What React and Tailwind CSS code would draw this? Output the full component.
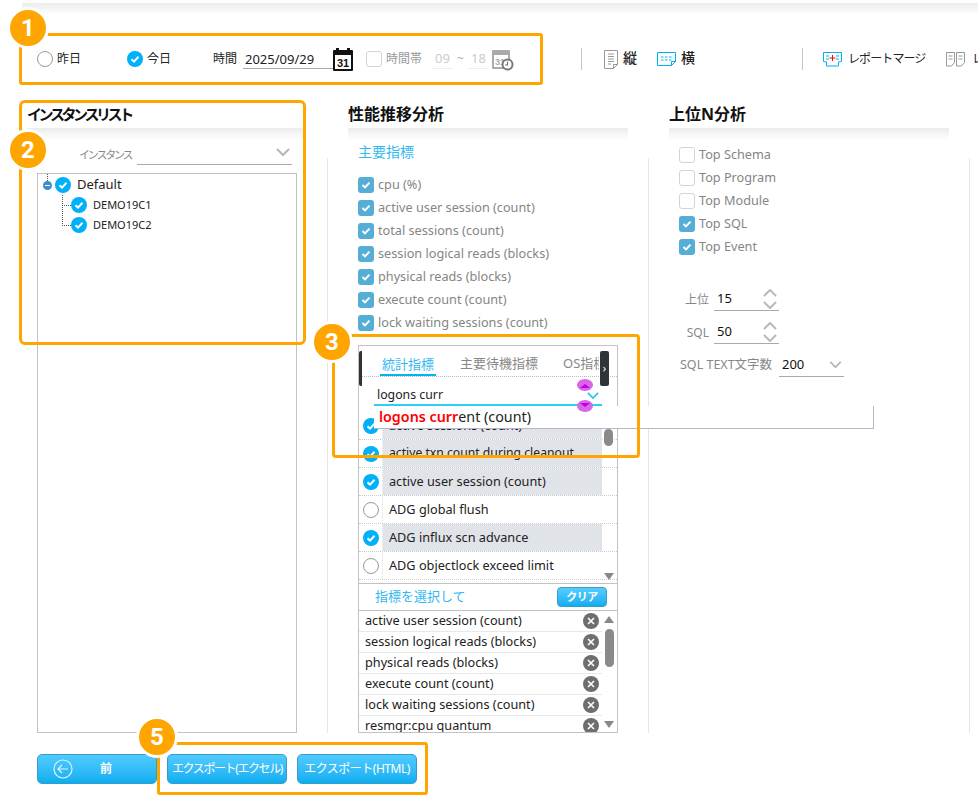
import React from "react";

const font = "font-['Noto_Sans','Noto_Sans_CJK_JP',sans-serif]";

const Tick = ({ size = 16, color = "#00b0f8" }) => (
  <svg width={size} height={size} viewBox="0 0 16 16" className="shrink-0">
    <circle cx="8" cy="8" r="8" fill={color} />
    <path d="M4.5 8.2 7 10.6 11.5 5.8" fill="none" stroke="#fff" strokeWidth="2" />
  </svg>
);

const Radio = () => (
  <span className="w-4 h-4 rounded-full border border-[#999] bg-white shrink-0"></span>
);

const Box = ({ on }) =>
  on ? (
    <span className="w-4 h-4 rounded-[3px] bg-[#55aed6] flex items-center justify-center shrink-0">
      <svg width="12" height="12" viewBox="0 0 12 12">
        <path d="M2.5 6 5 8.4 9.5 3.6" fill="none" stroke="#fff" strokeWidth="2" />
      </svg>
    </span>
  ) : (
    <span className="w-4 h-4 rounded-[3px] border border-[#d4d4d4] bg-white shrink-0"></span>
  );

const Chevron = ({ color = "#b4b4bc", w = 14, h = 8 }) => (
  <svg width={w} height={h} viewBox="0 0 14 8">
    <path d="M1 1 7 7 13 1" fill="none" stroke={color} strokeWidth="2" />
  </svg>
);

const Spinner = () => (
  <svg width="14" height="20" viewBox="0 0 14 20">
    <path d="M1 7 7 1 13 7M1 13 7 19 13 13" fill="none" stroke="#b8b8c0" strokeWidth="2" />
  </svg>
);

const Calendar = () => (
  <svg width="20" height="23" viewBox="0 0 20 23">
    <rect x="0" y="2" width="20" height="21" rx="1" fill="#111" />
    <rect x="2" y="7" width="16" height="14" fill="#fff" />
    <rect x="3" y="0" width="3" height="4" fill="#111" />
    <rect x="14" y="0" width="3" height="4" fill="#111" />
    <text x="10" y="19" textAnchor="middle" fontSize="11" fontWeight="700" fontFamily="Liberation Sans" fill="#111">31</text>
  </svg>
);

const CalendarClock = () => (
  <svg width="22" height="23" viewBox="0 0 22 23">
    <rect x="0" y="2" width="18" height="19" rx="1" fill="#aaa" />
    <rect x="2" y="7" width="14" height="12" fill="#fff" />
    <text x="8" y="17" textAnchor="middle" fontSize="9" fontWeight="700" fontFamily="Liberation Sans" fill="#aaa">31</text>
    <circle cx="15.5" cy="16.5" r="5" fill="#fff" stroke="#777" strokeWidth="2" />
    <path d="M15.5 13.5V17H13" fill="none" stroke="#777" strokeWidth="1.2" />
  </svg>
);

const PortraitIcon = () => (
  <svg width="14" height="19" viewBox="0 0 14 19">
    <path d="M.5.5h13v14l-4 4H.5zM13.5 14.5h-4v4" fill="#fff" stroke="#999" />
    <path d="M4 4h6M4 6.5h6M4 9h6M4 11.5h6M4 14h3" stroke="#999" />
  </svg>
);

const LandscapeIcon = () => (
  <svg width="19" height="14" viewBox="0 0 19 14">
    <path d="M.5.5h18v9l-4 4H.5zM18.5 9.5h-4v4" fill="#fff" stroke="#00b0f0" />
    <path d="M4 5h2.5M8 5h2.5M12 5h2.5M4 8h2.5M8 8h2.5M12 8h2.5" stroke="#00b0f0" />
  </svg>
);

const MergeIcon = () => (
  <svg width="19" height="15" viewBox="0 0 19 15">
    <path d="M.5.5h18v9l-3 .5v4H3.5v-4l-3-.5z" fill="#fff" stroke="#00b0f0" />
    <path d="M3 4h3M3 7h3M13 4h3M13 7h3" stroke="#00b0f0" />
    <path d="M9.5 3v6M6.5 6h6" stroke="#f00" />
  </svg>
);

const SplitIcon = () => (
  <svg width="19" height="15" viewBox="0 0 19 15">
    <path d="M.5.5h8v10l-3 3.5h-5zM10.5.5h8v10l-3 3.5h-5z" fill="#fff" stroke="#999" />
    <path d="M2.5 4h4M2.5 7h4M12.5 4h4M12.5 7h4" stroke="#999" />
  </svg>
);

const RemoveIcon = () => (
  <svg width="16" height="16" viewBox="0 0 16 16" className="shrink-0">
    <circle cx="8" cy="8" r="8" fill="#6e6e6e" />
    <path d="M5 5l6 6M11 5l-6 6" stroke="#fff" strokeWidth="1.6" />
  </svg>
);

const Badge = ({ n, className }) => (
  <div className={`absolute w-[42px] h-[42px] rounded-full bg-[#ffa500] border-[3px] border-white flex items-center justify-center text-white text-[24px] font-bold font-['Roboto',sans-serif] ${className}`}>
    {n}
  </div>
);

const Heading = ({ children, className = "", textClass = "text-[16px]" }) => (
  <div className={className}>
    <div className={`h-[28px] flex items-center font-bold text-[#111] whitespace-nowrap ${textClass}`}>{children}</div>
    <div className="h-[12px] bg-gradient-to-b from-[#ececec] to-white"></div>
  </div>
);

const Check = ({ on, label }) => (
  <div className="h-[23px] flex items-center gap-1 text-[12.7px] text-[#858585]">
    <Box on={on} />
    <span>{label}</span>
  </div>
);

const metrics = [
  { name: "active sessions (count)", on: true },
  { name: "active txn count during cleanout ...", on: true, tight: true },
  { name: "active user session (count)", on: true },
  { name: "ADG global flush", on: false },
  { name: "ADG influx scn advance", on: true },
  { name: "ADG objectlock exceed limit", on: false },
];

const picked = [
  "active user session (count)",
  "session logical reads (blocks)",
  "physical reads (blocks)",
  "execute count (count)",
  "lock waiting sessions (count)",
  "resmgr:cpu quantum",
];

const Handle = ({ className, children }) => (
  <div className={`absolute bg-[#2f3438] text-white flex items-center justify-center ${className}`}>{children}</div>
);

const Marker = ({ className, dy }) => (
  <svg width="16" height="12" viewBox="0 0 16 12" className={`absolute ${className}`}>
    <ellipse cx="8" cy="6" rx="8" ry="6" fill="#d966e8" />
    <path d={`M3 ${dy}h10l-5 ${dy > 6 ? -4 : 4}z`} fill="#c000e0" />
  </svg>
);

const MetricPanel = () => (
  <div className="relative w-[260px] flex-1 min-h-0 mt-[11px] border border-[#c2c2c2] flex flex-col text-[12.7px] text-[#222]">
    {/* tabs */}
    <div className="h-[31px] shrink-0 border-b border-dotted border-[#bbb] flex items-end overflow-hidden whitespace-nowrap text-[#888] text-[13px]">
      <span className="ml-[21px] w-[56px] h-[22px] text-center text-[#33b8f0] border-b-[3px] border-[#00b4f5] -mb-[1px]">統計指標</span>
      <span className="ml-[24px] h-[22px]">主要待機指標</span>
      <span className="ml-[25px] h-[22px] w-[36px] overflow-hidden">OS指標</span>
    </div>
    <Handle className="left-0 top-[5px] w-[3px] h-[35px] rounded-l-[2px]"></Handle>
    <Handle className="left-[241px] top-[5px] w-[9px] h-[35px] rounded-[2px] text-[11px]">›</Handle>
    {/* search */}
    <div className="relative h-[29px] shrink-0 ml-[15px] w-[228px] border-b-2 border-[#2dd0f5] flex items-center justify-between pl-[3px] pr-[3px] pt-[9px] text-[12.3px]">
      <span>logons curr</span>
      <Chevron color="#20c8f0" w={12} h={7} />
    </div>
    {/* list */}
    <div className="relative h-[178px] shrink-0 overflow-hidden border-b border-[#c2c2c2]">
      <div className="mt-[6px] flex flex-col">
        {metrics.map((m) => (
          <div key={m.name} className="h-[28px] shrink-0 flex border-b border-dotted border-[#ccc]">
            <div className="w-[24px] shrink-0 flex items-center justify-center border-r border-dotted border-[#ddd]">
              {m.on ? <Tick /> : <Radio />}
            </div>
            <div className={`w-[219px] pl-[6px] flex items-center whitespace-nowrap overflow-hidden ${m.on ? "bg-[#e0e3e8]" : ""} ${m.tight ? "text-[12.2px]" : ""}`}>{m.name}</div>
          </div>
        ))}
      </div>
      <div className="absolute right-[4px] top-[23px] w-[9px] h-[17px] rounded-full bg-[#8a8a8a]"></div>
      <div className="absolute right-[3px] bottom-[3px] w-0 h-0 border-x-[5px] border-x-transparent border-t-[7px] border-t-[#888]"></div>
    </div>
    {/* selected */}
    <div className="h-[27px] shrink-0 flex items-center justify-between pl-[16px] pr-[10px] border-b border-[#c2c2c2] text-[13px] text-[#33b8f0]">
      <span>指標を選択して</span>
      <button className="w-[50px] h-[20px] rounded-[4px] border border-[#3a9cc4] bg-gradient-to-b from-[#55ccff] to-[#08aef0] text-white text-[11px] font-bold tracking-[-0.5px]">クリア</button>
    </div>
    <div className="relative flex-1 min-h-0 overflow-hidden">
      {picked.map((p) => (
        <div key={p} className="w-[243px] h-[21px] shrink-0 flex items-center justify-between pl-[6px] pr-[3px] border-b border-[#e8e8e8] whitespace-nowrap">
          <span>{p}</span>
          <RemoveIcon />
        </div>
      ))}
      <div className="absolute right-[3px] top-[5px] w-0 h-0 border-x-[5px] border-x-transparent border-b-[7px] border-b-[#888]"></div>
      <div className="absolute right-[3px] top-[18px] w-[9px] h-[38px] rounded-full bg-[#8a8a8a]"></div>
      <div className="absolute right-[3px] bottom-[4px] w-0 h-0 border-x-[5px] border-x-transparent border-t-[7px] border-t-[#888]"></div>
    </div>
  </div>
);

const NumberField = ({ label, value, labelClass, children }) => (
  <div className="h-[33px] flex items-end">
    <span className={`mb-[2px] whitespace-nowrap ${labelClass}`}>{label}</span>
    <div className="ml-[5px] w-[65px] h-[24px] border-b border-[#aaa] flex items-center justify-between pl-[3px] pr-[2px] text-[13px] text-[#111]">
      <span>{value}</span>
      {children}
    </div>
  </div>
);

export default function App() {
  return (
    <div className={`relative w-[978px] h-[799px] overflow-hidden bg-white ${font}`}>
      {/* top shade */}
      <div className="h-[15px] pt-[3px]">
        <div className="ml-[22px] h-[12px] bg-gradient-to-b from-[#ececec] to-white"></div>
      </div>

      {/* toolbar */}
      <div className="h-[85px] pt-[3px] pl-[37px] flex items-center whitespace-nowrap text-[12px] text-[#222] [&>*]:shrink-0">
        <Radio />
        <span className="ml-[4px] w-[70px]">昨日</span>
        <Tick />
        <span className="ml-[4px] w-[66px]">今日</span>
        <span className="w-[30px]">時間</span>
        <span className="w-[90px] h-[20px] pl-[2px] border-b border-[#aaa] text-[13px] leading-[20px]">2025/09/29</span>
        <Calendar />
        <span className="ml-[13px] flex"><Box /></span>
        <span className="ml-[4px] w-[46px] text-[#999]">時間帯</span>
        <span className="w-[21px] text-[13px] text-[#ccc] border-b border-[#eee] text-center">09</span>
        <span className="w-[15px] text-center text-[#aaa]">~</span>
        <span className="w-[21px] text-[13px] text-[#ccc] border-b border-[#eee] text-center">18</span>
        <span className="ml-[3px] flex"><CalendarClock /></span>
        <span className="ml-[67px] w-px h-[22px] bg-[#c4c4c4]"></span>
        <span className="ml-[22px] flex"><PortraitIcon /></span>
        <span className="ml-[5px] w-[34px] mb-[3px] text-[14px] font-medium">縦</span>
        <LandscapeIcon />
        <span className="ml-[5px] w-[121px] mb-[3px] text-[14px] font-medium">横</span>
        <span className="w-px h-[22px] bg-[#c4c4c4]"></span>
        <span className="ml-[20px] flex"><MergeIcon /></span>
        <span className="ml-[6px] w-[98px] tracking-[-0.9px]">レポートマージ</span>
        <SplitIcon />
        <span className="ml-[7px]">レ</span>
      </div>

      {/* columns */}
      <div className="h-[633px] flex">
        <div className="w-[327px] pl-[20px] shrink-0 flex flex-col">
          <Heading className="pl-[7px] pr-[22px]" textClass="text-[15px] tracking-[-3.4px]">インスタンスリスト</Heading>
          <div className="h-[33px] pl-[59px] flex items-start text-[11px] text-[#888] whitespace-nowrap">
            <span className="w-[58px] mt-[7px] tracking-[-2.2px]">インスタンス</span>
            <div className="w-[155px] h-[25px] border-b border-[#aaa] flex items-center justify-end pr-[2px]">
              <Chevron />
            </div>
          </div>
          <div className="ml-[17px] w-[260px] flex-1 border border-[#c2c2c2] relative text-[#222]">
            <div className="absolute left-[9px] top-0 h-[7px] border-l border-dotted border-[#555]"></div>
            <div className="absolute left-[5px] top-[7px] w-[9px] h-[9px] rounded-full bg-[#3b8ec8] flex items-center justify-center">
              <span className="w-[5px] h-[1.5px] bg-white"></span>
            </div>
            <div className="absolute left-[24px] top-[21px] h-[31px] w-[9px] border-l border-b border-dotted border-[#555]"></div>
            <div className="absolute left-[24px] top-[31px] w-[9px] border-b border-dotted border-[#555]"></div>
            <div className="relative pl-[17px] h-[21px] flex items-center gap-[6px] text-[13px]">
              <Tick />
              <span>Default</span>
            </div>
            <div className="relative pl-[33px] flex items-center gap-[6px] h-[20px] text-[11px]">
              <Tick />
              <span>DEMO19C1</span>
            </div>
            <div className="relative pl-[33px] flex items-center gap-[6px] h-[20px] text-[11px]">
              <Tick />
              <span>DEMO19C2</span>
            </div>
          </div>
        </div>

        <div className="w-[321px] shrink-0 flex flex-col">
          <Heading className="ml-[21px] w-[280px]">性能推移分析</Heading>
          <div className="flex-1 min-h-0 mt-[18px] border-l border-[#e6e6e6] pl-[30px] flex flex-col">
            <div className="-mt-[18px] h-[22px] flex items-center text-[14px] text-[#33b8f0]">主要指標</div>
            <div className="mt-[11px]">
              <Check on label="cpu (%)" />
              <Check on label="active user session (count)" />
              <Check on label="total sessions (count)" />
              <Check on label="session logical reads (blocks)" />
              <Check on label="physical reads (blocks)" />
              <Check on label="execute count (count)" />
              <Check on label="lock waiting sessions (count)" />
            </div>
            <MetricPanel />
          </div>
        </div>

        <div className="w-[322px] shrink-0 flex flex-col">
          <Heading className="ml-[21px] w-[280px]">上位N分析</Heading>
          <div className="flex-1 mt-[18px] border-l border-r border-[#e6e6e6] pl-[30px] flex flex-col">
            <div className="-mt-[15px]">
              <Check label="Top Schema" />
              <Check label="Top Program" />
              <Check label="Top Module" />
              <Check on label="Top SQL" />
              <Check on label="Top Event" />
            </div>
            <div className="mt-[20px] text-[12px] text-[#888]">
              <NumberField label="上位" value="15" labelClass="w-[30px] text-right"><Spinner /></NumberField>
              <NumberField label="SQL" value="50" labelClass="w-[30px] text-right"><Spinner /></NumberField>
              <NumberField label="SQL TEXT文字数" value="200" labelClass="w-[95px] text-[12.5px] pl-[1px]"><Chevron w={13} h={7} /></NumberField>
            </div>
          </div>
        </div>
      </div>

      {/* footer buttons */}
      <div className="mt-[21px] pl-[37px] flex gap-[10px] text-white text-[12px]">
        <button className="relative w-[120px] h-[30px] pl-[18px] rounded-[5px] border border-[#3a9cc4] bg-gradient-to-b from-[#4fcbff] to-[#08aef0] font-bold">
          <svg width="20" height="20" viewBox="0 0 20 20" className="absolute left-[15px] top-[4px]">
            <circle cx="10" cy="10" r="9" fill="none" stroke="#dff5ff" strokeWidth="1.2" />
            <path d="M15 10H5M9 6l-4 4 4 4" fill="none" stroke="#dff5ff" strokeWidth="1.2" />
          </svg>
          前
        </button>
        <button className="w-[120px] h-[30px] rounded-[5px] border border-[#3a9cc4] bg-gradient-to-b from-[#4fcbff] to-[#08aef0] tracking-[-1.4px] whitespace-nowrap">エクスポート(エクセル)</button>
        <button className="w-[120px] h-[30px] rounded-[5px] border border-[#3a9cc4] bg-gradient-to-b from-[#4fcbff] to-[#08aef0] tracking-[-0.5px] whitespace-nowrap">エクスポート(HTML)</button>
      </div>

      {/* autocomplete popup */}
      <div className="absolute left-[374px] top-[406px] w-[500px] h-[23px] bg-white border-r border-b border-[#b4b8c6] pl-[5px] flex items-center whitespace-pre text-[14.3px] text-[#222]">
        <span className="text-[#f00] font-semibold">logons curr</span>
        <span>ent (count)</span>
      </div>
      <Marker className="left-[577px] top-[379px]" dy={9} />
      <Marker className="left-[577px] top-[400px]" dy={3} />

      {/* annotation frames */}
      <div className="absolute left-[19px] top-[33px] w-[524px] h-[52px] border-[3px] border-[#ffa500] rounded-[3px]"></div>
      <div className="absolute left-[19px] top-[100px] w-[287px] h-[245px] border-[3px] border-[#ffa500] rounded-[6px]"></div>
      <div className="absolute left-[332px] top-[334px] w-[308px] h-[124px] border-[3px] border-[#ffa500] rounded-[4px]"></div>
      <div className="absolute left-[157px] top-[742px] w-[271px] h-[53px] border-[3px] border-[#ffa500] rounded-[3px]"></div>
      <Badge n="1" className="left-[7px] top-[7px]" />
      <Badge n="2" className="left-[7px] top-[129px]" />
      <Badge n="3" className="left-[311px] top-[321px]" />
      <Badge n="5" className="left-[136px] top-[716px]" />
    </div>
  );
}
